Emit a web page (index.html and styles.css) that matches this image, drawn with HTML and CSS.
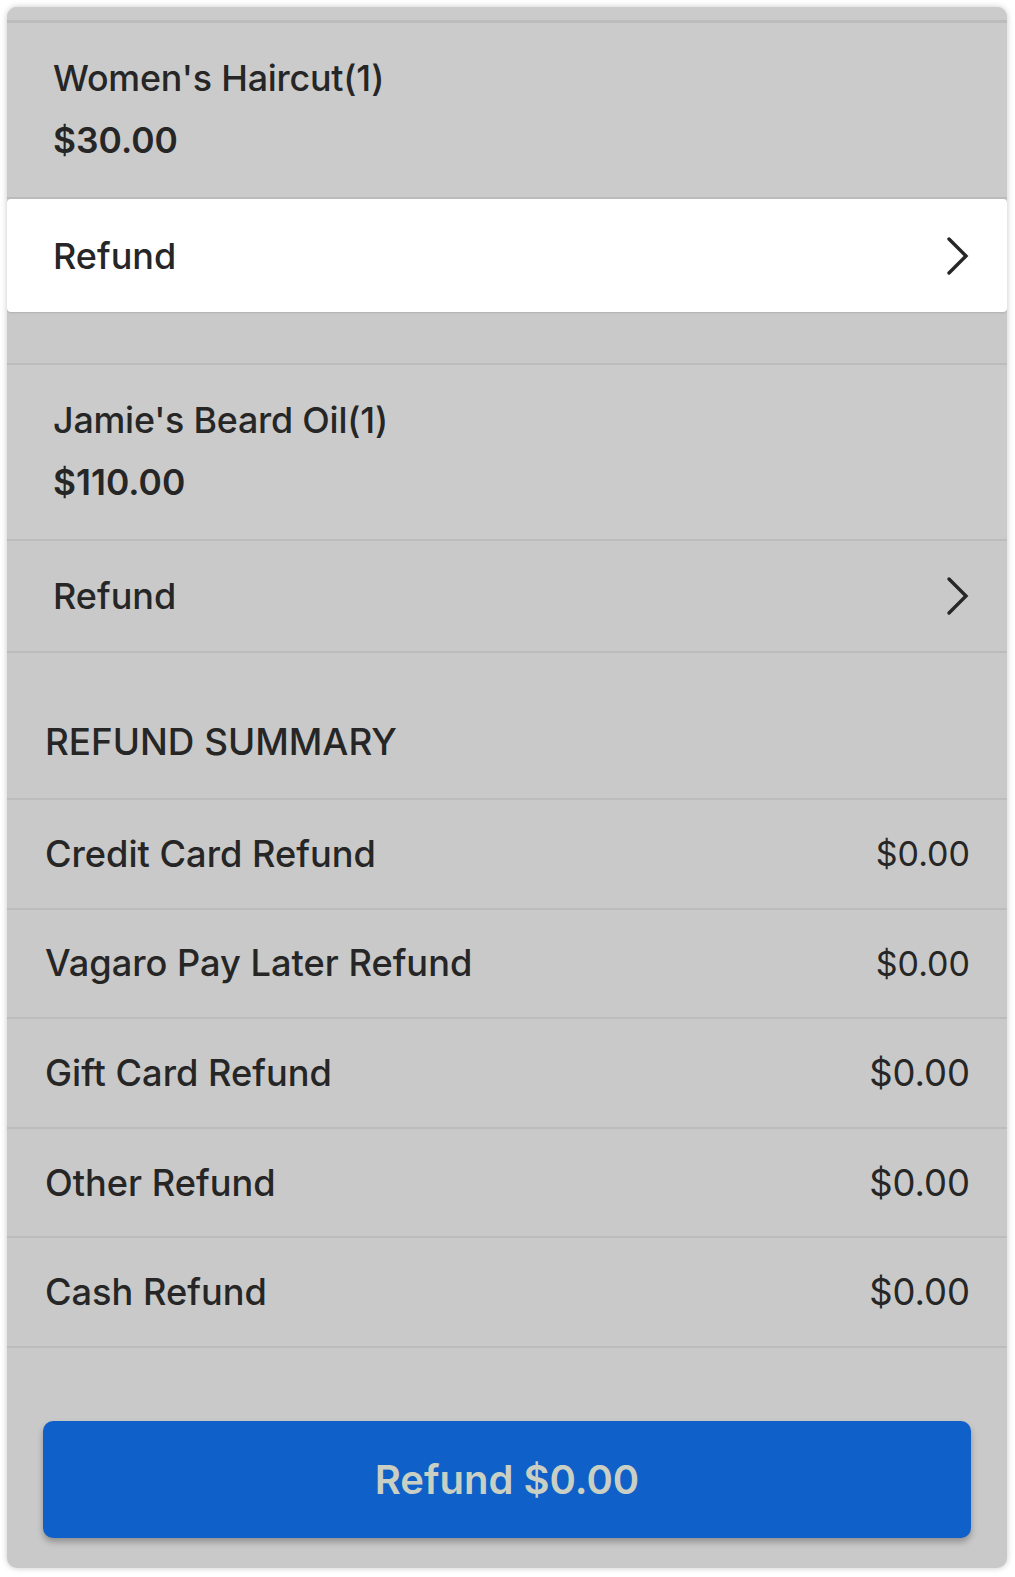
FILE: index.html
```html
<!DOCTYPE html>
<html lang="en">
<head>
<meta charset="utf-8">
<title>Refund</title>
<link rel="stylesheet" href="styles.css">
</head>
<body>
<div class="card">
  <div class="top-strip"></div>

  <section class="item">
    <div class="item-name">Women's Haircut(1)</div>
    <div class="item-price">$30.00</div>
  </section>
  <div class="refund-row refund-row--active">
    <span class="refund-label">Refund</span>
    <svg class="chevron" viewBox="0 0 24 40" width="24" height="40" aria-hidden="true"><path d="M3 3 L20 20 L3 37" fill="none" stroke="#262626" stroke-width="3.4" stroke-linecap="round" stroke-linejoin="miter"/></svg>
  </div>
  <div class="spacer"></div>

  <section class="item">
    <div class="item-name">Jamie's Beard Oil(1)</div>
    <div class="item-price">$110.00</div>
  </section>
  <div class="refund-row">
    <span class="refund-label">Refund</span>
    <svg class="chevron" viewBox="0 0 24 40" width="24" height="40" aria-hidden="true"><path d="M3 3 L20 20 L3 37" fill="none" stroke="#262626" stroke-width="3.4" stroke-linecap="round" stroke-linejoin="miter"/></svg>
  </div>

  <div class="summary-header">REFUND SUMMARY</div>
  <div class="summary-row"><span class="summary-label">Credit Card Refund</span><span class="summary-amount summary-amount--sm">$0.00</span></div>
  <div class="summary-row"><span class="summary-label">Vagaro Pay Later Refund</span><span class="summary-amount summary-amount--sm">$0.00</span></div>
  <div class="summary-row"><span class="summary-label">Gift Card Refund</span><span class="summary-amount">$0.00</span></div>
  <div class="summary-row"><span class="summary-label">Other Refund</span><span class="summary-amount">$0.00</span></div>
  <div class="summary-row"><span class="summary-label">Cash Refund</span><span class="summary-amount">$0.00</span></div>

  <div class="footer">
    <button class="refund-button" type="button">Refund $0.00</button>
  </div>
</div>
</body>
</html>
```

FILE: styles.css
```css
* { box-sizing: border-box; }

html, body {
  margin: 0;
  padding: 0;
  background: #ffffff;
}

body {
  padding: 7px 8px 9px 7px;
  font-family: "Inter", "Open Sans", "Liberation Sans", sans-serif;
  color: #262626;
}

.card {
  width: 1000px;
  height: 1561px;
  background: #c9c9c9;
  border-radius: 10px;
  box-shadow: 0 0 6px rgba(0, 0, 0, 0.22);
  overflow: hidden;
  display: flex;
  flex-direction: column;
}

.top-strip {
  height: 16px;
  border-bottom: 3px solid #bcbcbc;
  background: #cbcbcb;
  flex: none;
}

.item {
  height: 176px;
  padding: 33px 0 0 46px;
  border-bottom: 2px solid #bcbcbc;
  background: #cbcbcb;
  flex: none;
}

.item-name {
  font-size: 35.8px;
  font-weight: 500;
  line-height: 44px;
  letter-spacing: -0.2px;
}

.item-price {
  margin-top: 19px;
  font-size: 35.4px;
  font-weight: 600;
  line-height: 44px;
}

.refund-row {
  height: 112px;
  display: flex;
  align-items: center;
  justify-content: space-between;
  padding: 0 37px 0 46px;
  border-bottom: 2px solid #bcbcbc;
  flex: none;
}

.refund-row--active {
  background: #ffffff;
  border-bottom: none;
  border-radius: 4px;
  box-shadow: 0 1px 2px rgba(0, 0, 0, 0.12);
  height: 113px;
}

.refund-label {
  font-size: 36px;
  font-weight: 500;
}

.chevron {
  display: block;
  flex: none;
}

.spacer {
  height: 53px;
  border-bottom: 2px solid #bcbcbc;
  flex: none;
}

.summary-header {
  height: 147px;
  padding: 67px 0 0 38px;
  font-size: 36.8px;
  font-weight: 500;
  line-height: 44px;
  border-bottom: 2px solid #bcbcbc;
  flex: none;
}

.summary-row {
  height: 109.6px;
  display: flex;
  align-items: center;
  justify-content: space-between;
  padding: 0 37px 0 38px;
  border-bottom: 2px solid #bcbcbc;
  flex: none;
}

.summary-label {
  font-size: 36.2px;
  font-weight: 500;
}

.summary-amount {
  font-size: 36.4px;
  font-weight: 400;
}

.summary-amount--sm {
  font-size: 34px;
}

.footer {
  flex: 1;
  padding: 73px 36px 0 36px;
}

.refund-button {
  display: block;
  width: 100%;
  height: 117px;
  border: none;
  border-radius: 10px;
  background: #0f60c8;
  color: #c9d0c3;
  font-family: inherit;
  font-size: 40px;
  font-weight: 600;
  box-shadow: 0 4px 6px rgba(0, 0, 0, 0.28);
  cursor: pointer;
}
```
